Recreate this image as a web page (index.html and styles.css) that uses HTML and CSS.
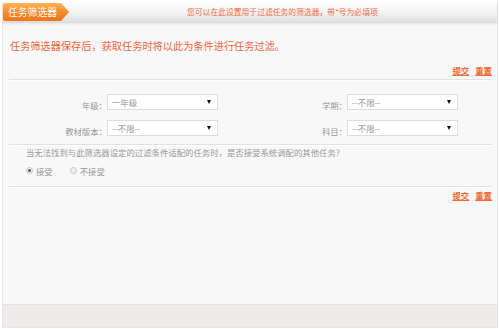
FILE: index.html
```html
<!DOCTYPE html>
<html lang="zh">
<head>
<meta charset="utf-8">
<title>任务筛选器</title>
<link rel="stylesheet" href="styles.css">
</head>
<body>
<div class="panel">
  <div class="header">
    <div class="tab">任务筛选器</div>
    <div class="notice">您可以在此设置用于过滤任务的筛选器，带*号为必填项</div>
  </div>
  <div class="content">
    <p class="intro">任务筛选器保存后，获取任务时将以此为条件进行任务过滤。</p>
    <div class="actions top"><a href="#">提交</a><a href="#">重置</a></div>
    <div class="rule r1"></div>
    <div class="form">
      <span class="label">年级：</span>
      <div class="select"><span>一年级</span><i class="arrow"></i></div>
      <span class="label">学期：</span>
      <div class="select"><span>--不限--</span><i class="arrow"></i></div>
      <span class="label">教材版本：</span>
      <div class="select"><span>--不限--</span><i class="arrow"></i></div>
      <span class="label">科目：</span>
      <div class="select"><span>--不限--</span><i class="arrow"></i></div>
    </div>
    <div class="rule"></div>
    <p class="question">当无法找到与此筛选器设定的过滤条件适配的任务时，是否接受系统调配的其他任务？</p>
    <div class="radios">
      <label class="radio"><span class="dot checked"></span>接受</label>
      <label class="radio"><span class="dot"></span>不接受</label>
    </div>
    <div class="rule r3"></div>
    <div class="actions bottom"><a href="#">提交</a><a href="#">重置</a></div>
  </div>
  <div class="footer"></div>
</div>
</body>
</html>
```

FILE: styles.css
```css
html, body {
  margin: 0;
  padding: 0;
  background: #ffffff;
}
body {
  font-family: "Noto Sans CJK SC", "Noto Sans", sans-serif;
  width: 500px;
  height: 329px;
  overflow: hidden;
}
.panel {
  margin: 2px 2px 0 2px;
  width: 494px;
  border: 1px solid #e6e6e6;
  border-top: none;
  background: #f8f8f8;
  display: flex;
  flex-direction: column;
}
.header {
  height: 20px;
  display: flex;
  align-items: center;
  background: linear-gradient(#fefefe, #f2f2f2 55%, #e0e0e0);
  border-bottom: 1px solid #dcdcdc;
  box-shadow: 0 1px 2px rgba(0,0,0,0.08);
}
.tab {
  height: 18px;
  width: 66px;
  box-sizing: border-box;
  padding-left: 5px;
  font-size: 9.8px;
  line-height: 18px;
  color: #ffffff;
  background: linear-gradient(#fdb45a, #f88a2a 50%, #f27418);
  clip-path: polygon(0 0, 58px 0, 66px 50%, 58px 100%, 0 100%);
  border-radius: 2px 0 0 2px;
}
.notice {
  margin-left: 118px;
  font-size: 7.8px;
  color: #f26a3c;
  line-height: 10px;
}
.content {
  padding: 0 5px 0 6px;
  height: 281px;
  box-sizing: border-box;
}
.intro {
  margin: 16px 0 0 1px;
  font-size: 10.2px;
  line-height: 14px;
  color: #f0643a;
}
.actions {
  display: flex;
  justify-content: flex-end;
  gap: 6px;
}
.actions.top {
  margin-top: 12px;
}
.actions.bottom {
  margin-top: 2px;
}
.actions a {
  font-size: 8.4px;
  line-height: 11px;
  color: #f26a2e;
  font-weight: bold;
  text-decoration: underline;
}
.rule {
  height: 1px;
  background: #e2e2e2;
  border-bottom: 1px solid #ffffff;
}
.rule.r1 {
  margin-top: 3px;
}
.rule.r3 {
  margin-top: 9px;
}
.form {
  display: grid;
  grid-template-columns: 98px 111px 129px 111px;
  grid-auto-rows: 16px;
  row-gap: 10px;
  margin-top: 13px;
  margin-bottom: 8px;
}
.label {
  font-size: 8.4px;
  line-height: 16px;
  color: #999999;
  text-align: right;
  padding-top: 3px;
}
.select {
  box-sizing: border-box;
  border: 1px solid #dddddd;
  background: #ffffff;
  display: flex;
  align-items: center;
  justify-content: space-between;
  padding: 0 6px 0 4px;
  font-size: 8.4px;
  color: #999999;
}
.arrow {
  width: 0;
  height: 0;
  border-left: 2.5px solid transparent;
  border-right: 2.5px solid transparent;
  border-top: 4px solid #111111;
}
.question {
  margin: 0 0 0 17px;
  font-size: 8.4px;
  line-height: 12px;
  color: #999999;
}
.radios {
  display: flex;
  gap: 17px;
  margin: 6px 0 0 17px;
  height: 13px;
  align-items: center;
}
.radio {
  display: flex;
  align-items: center;
  gap: 3px;
  font-size: 8.4px;
  color: #999999;
}
.dot {
  width: 7px;
  height: 7px;
  box-sizing: border-box;
  border-radius: 50%;
  border: 1px solid #c4c4c4;
  background: #f0f0f0;
  display: inline-block;
  position: relative;
}
.dot.checked::after {
  content: "";
  position: absolute;
  left: 1px;
  top: 1px;
  width: 3px;
  height: 3px;
  border-radius: 50%;
  background: #555555;
}
.footer {
  height: 22px;
  background: #efebea;
  border-top: 1px solid #e6e2e1;
}
```
